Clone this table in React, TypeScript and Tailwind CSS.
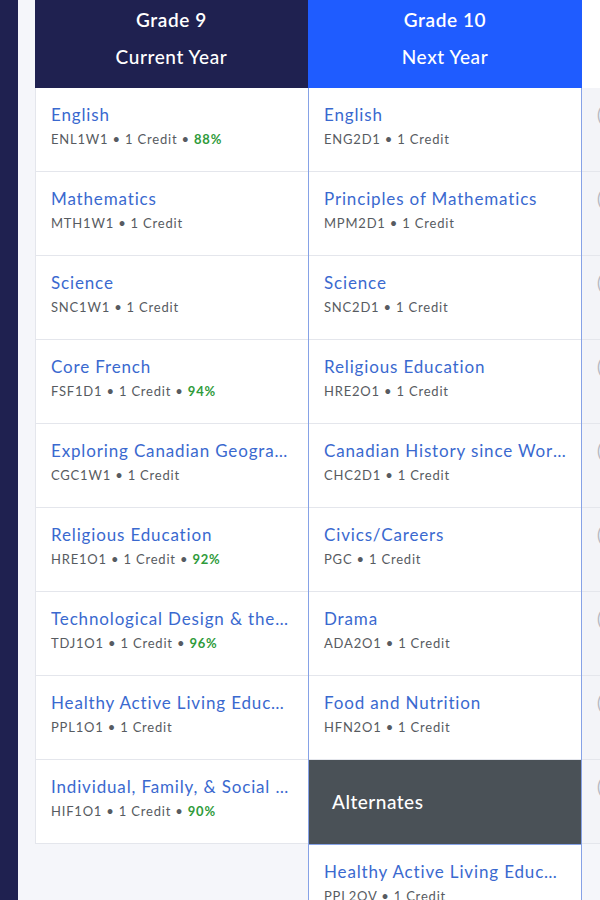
import React from "react";

type Course = {
  title: string;
  code: string;
  grade?: string;
};

const currentYear: Course[] = [
  { title: "English", code: "ENL1W1", grade: "88%" },
  { title: "Mathematics", code: "MTH1W1" },
  { title: "Science", code: "SNC1W1" },
  { title: "Core French", code: "FSF1D1", grade: "94%" },
  { title: "Exploring Canadian Geography", code: "CGC1W1" },
  { title: "Religious Education", code: "HRE1O1", grade: "92%" },
  { title: "Technological Design & the Environment", code: "TDJ1O1", grade: "96%" },
  { title: "Healthy Active Living Education", code: "PPL1O1" },
  { title: "Individual, Family, & Social Studies", code: "HIF1O1", grade: "90%" },
];

const nextYear: Course[] = [
  { title: "English", code: "ENG2D1" },
  { title: "Principles of Mathematics", code: "MPM2D1" },
  { title: "Science", code: "SNC2D1" },
  { title: "Religious Education", code: "HRE2O1" },
  { title: "Canadian History since World War I", code: "CHC2D1" },
  { title: "Civics/Careers", code: "PGC" },
  { title: "Drama", code: "ADA2O1" },
  { title: "Food and Nutrition", code: "HFN2O1" },
];

const alternates: Course[] = [
  { title: "Healthy Active Living Education", code: "PPL2OV" },
];

function CourseRow({ course }: { course: Course }) {
  return (
    <div className="h-[84px] shrink-0 border-b border-[#e4e6ec] bg-white px-[15px] pt-[16px]">
      <div className="truncate text-[17px] leading-[22px] tracking-[0.85px] text-[#3a69cf]">
        {course.title}
      </div>
      <div className="mt-[4px] text-[13px] leading-[18px] tracking-[0.8px] text-[#575b61]">
        {course.code} • 1 Credit
        {course.grade && (
          <>
            {" "}• <span className="font-bold text-[#2f9b3b]">{course.grade}</span>
          </>
        )}
      </div>
    </div>
  );
}

function YearHeader({ grade, label, className }: { grade: string; label: string; className: string }) {
  return (
    <div className={`flex h-[88px] shrink-0 flex-col items-center pt-[7px] tracking-[0.6px] text-white ${className}`}>
      <div className="text-[19px] font-semibold leading-[26px]">{grade}</div>
      <div className="mt-[11px] text-[19px] font-medium leading-[26px]">{label}</div>
    </div>
  );
}

export default function App() {
  return (
    <div
      className="flex h-[900px] w-[600px] overflow-hidden bg-[#f5f6fa]"
      style={{ fontFamily: "Lato, 'Open Sans', sans-serif" }}
    >
      <div className="w-[18px] shrink-0 bg-[#1f2150]" />
      <div className="w-[17px] shrink-0" />

      {/* current year */}
      <div className="flex w-[273px] shrink-0 flex-col">
        <YearHeader grade="Grade 9" label="Current Year" className="bg-[#1f2150]" />
        <div className="flex flex-col border-l border-[#e4e6ec]">
          {currentYear.map((c) => (
            <CourseRow key={c.code} course={c} />
          ))}
        </div>
      </div>

      {/* next year */}
      <div className="flex w-[274px] shrink-0 flex-col">
        <YearHeader grade="Grade 10" label="Next Year" className="bg-[#1f5cff]" />
        <div className="flex flex-1 flex-col border-x border-[#86a2e6] bg-white">
          {nextYear.map((c) => (
            <CourseRow key={c.code} course={c} />
          ))}
          <div className="flex h-[85px] shrink-0 items-center border-b border-[#86a2e6] bg-[#4a5157] pl-[23px] text-[19px] font-medium tracking-[0.5px] text-white">
            Alternates
          </div>
          {alternates.map((c) => (
            <CourseRow key={c.code} course={c} />
          ))}
        </div>
      </div>

      {/* following year, cut off */}
      <div className="flex min-w-0 flex-1 flex-col overflow-hidden">
        <div className="h-[88px] shrink-0 bg-white" />
        {Array.from({ length: 9 }).map((_, i) => (
          <div
            key={i}
            className="flex h-[84px] shrink-0 items-start overflow-hidden border-b border-[#e4e6ec] bg-[#f3f4f8] pl-[15px] pt-[16px] text-[17px] leading-[22px] text-[#b5b8c0]"
          >
            (
          </div>
        ))}
      </div>
    </div>
  );
}
